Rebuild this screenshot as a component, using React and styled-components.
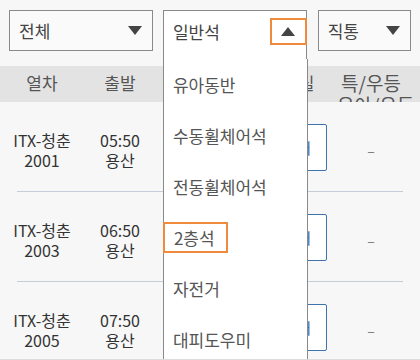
import React from "react"
import styled, { createGlobalStyle } from "styled-components"

const GlobalStyle = createGlobalStyle`
html, body {
margin: 0;
padding: 0;
background: #f7f7f7;
font-family: "Noto Sans CJK KR", "Noto Sans", sans-serif;
overflow: hidden;
}
`

const trains = [
    { name: "ITX-청춘", no: "2001", time: "05:50", from: "용산" },
    { name: "ITX-청춘", no: "2003", time: "06:50", from: "용산" },
    { name: "ITX-청춘", no: "2005", time: "07:50", from: "용산" },
]

const seatOptions = ["유아동반", "수동휠체어석", "전동휠체어석", "2층석", "자전거", "대피도우미"]

export default function App() {
    return (
        <Page>
            <GlobalStyle />
            <FilterBar>
                <Select width={145}>
                    <SelectText>전체</SelectText>
                    <Arrow />
                </Select>
                <DropdownWrap>
                    <DropdownHead>
                        <SelectText>일반석</SelectText>
                        <ArrowBox>
                            <Arrow up />
                        </ArrowBox>
                    </DropdownHead>
                    <OptionList>
                        {seatOptions.map((item) => (
                            <Option key={item}>
                                <OptionLabel focused={item === "2층석"}>{item}</OptionLabel>
                            </Option>
                        ))}
                    </OptionList>
                </DropdownWrap>
                <Select width={94}>
                    <SelectText>직통</SelectText>
                    <Arrow />
                </Select>
            </FilterBar>

            <Table>
                <HeaderRow>
                    <HeadCell>열차</HeadCell>
                    <HeadCell>출발</HeadCell>
                    <HeadCell>도착</HeadCell>
                    <HeadCell>일반실</HeadCell>
                    <HeadCell wide>특/우등<br />유아/우등</HeadCell>
                </HeaderRow>
                {trains.map((t) => (
                    <Row key={t.no}>
                        <Cell>{t.name}<br />{t.no}</Cell>
                        <Cell>{t.time}<br />{t.from}</Cell>
                        <Cell>06:58<br />춘천</Cell>
                        <ButtonCell><ReserveButton>예매</ReserveButton></ButtonCell>
                        <Cell><Dash>–</Dash></Cell>
                    </Row>
                ))}
            </Table>
        </Page>
    )
}

const Page = styled.div`
position: relative;
width: 420px;
height: 359px;
overflow: hidden;
background: #f7f7f7;
border-bottom: 1px solid #dcdcdc;
`

const FilterBar = styled.div`
display: flex;
align-items: flex-start;
gap: 10px;
padding: 10px 9px 0 9px;
height: 66px;
box-sizing: border-box;
`

const Select = styled.div`
display: flex;
align-items: center;
justify-content: space-between;
box-sizing: border-box;
width: ${(p) => p.width}px;
height: 41px;
padding: 0 10px 0 9px;
border: 1px solid #8a8a8a;
background: #fafafa;
`

const SelectText = styled.span`
font-size: 17px;
color: #444;
`

const Arrow = styled.span`
width: 0;
height: 0;
border-left: 7px solid transparent;
border-right: 7px solid transparent;
${(p) => p.up ? "border-bottom: 9px solid #444;" : "border-top: 9px solid #444;"}
`

const DropdownWrap = styled.div`
position: relative;
width: 145px;
height: 41px;
margin-right: 1px;
z-index: 5;
`

const DropdownHead = styled.div`
display: flex;
align-items: center;
justify-content: space-between;
box-sizing: border-box;
height: 49px;
padding: 0 0 7px 9px;
background: #fff;
border: 1px solid #8a8a8a;
border-bottom: none;
`

const ArrowBox = styled.div`
display: flex;
align-items: center;
justify-content: center;
box-sizing: border-box;
width: 37px;
height: 27px;
margin-right: -1px;
border: 2px solid #f08a3c;
`

const OptionList = styled.div`
position: absolute;
left: 0;
top: 49px;
width: 145px;
box-sizing: border-box;
background: #fff;
border: 1px solid #8a8a8a;
border-top: none;
padding-bottom: 20px;
`

const Option = styled.div`
display: flex;
align-items: center;
height: 51px;
`

const OptionLabel = styled.span`
font-size: 17px;
color: #555;
box-sizing: border-box;
line-height: 27px;
padding: 0 ${(p) => p.focused ? "11px" : "0"} 0 9px;
margin-left: ${(p) => p.focused ? "-1px" : "0"};
border: ${(p) => p.focused ? "2px solid #f08a3c" : "none"};
`

const Table = styled.div`
display: flex;
flex-direction: column;
`

const columns = "84px 72px 89px 92px 68px"

const HeaderRow = styled.div`
display: grid;
grid-template-columns: ${columns};
height: 36px;
background: #e3e3e3;
overflow: hidden;
`

const HeadCell = styled.div`
text-align: center;
white-space: nowrap;
font-size: ${(p) => p.wide ? "19px" : "17px"};
line-height: 22px;
padding-top: 6px;
color: #555;
`

const Row = styled.div`
position: relative;
display: grid;
grid-template-columns: ${columns};
align-items: center;
height: 90px;
&::after {
    content: "";
    position: absolute;
    left: 17px;
    right: 17px;
    bottom: 0;
    height: 1px;
    background: #c6ccd8;
}
`

const Cell = styled.div`
display: flex;
align-items: center;
justify-content: center;
text-align: center;
font-size: 16px;
line-height: 20px;
padding-top: 6px;
color: #333;
`

const ButtonCell = styled.div`
display: flex;
justify-content: flex-end;
padding-right: 10px;
`

const ReserveButton = styled.div`
display: flex;
align-items: center;
justify-content: center;
width: 60px;
height: 47px;
box-sizing: border-box;
border: 1px solid #3f73ad;
border-radius: 2px;
color: #2f65a8;
font-size: 15px;
background: #fff;
`

const Dash = styled.span`
color: #777;
font-size: 14px;
`
